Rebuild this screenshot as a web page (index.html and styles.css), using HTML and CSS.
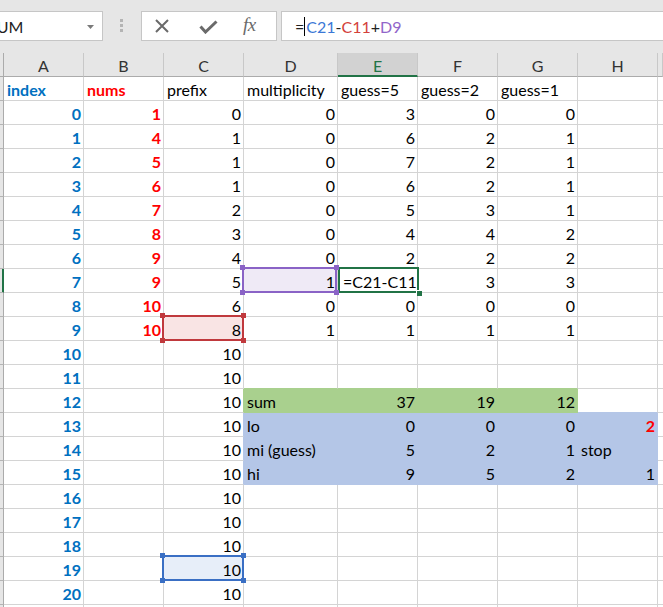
FILE: index.html
```html
<!DOCTYPE html>
<html>
<head>
<meta charset="utf-8">
<link rel="stylesheet" href="styles.css">
</head>
<body>
<div class="toolbar">
  <div class="namebox">
    <span class="nb-text">SUM</span>
    <svg class="nb-arrow" width="7" height="4" viewBox="0 0 7 4"><polygon points="0,0 7,0 3.5,4" fill="#7a7a7a"/></svg>
  </div>
  <div class="grip"><i></i><i></i><i></i></div>
  <div class="btns">
    <svg class="ic-x" width="14" height="14" viewBox="0 0 14 14"><path d="M1 1 L13 13 M13 1 L1 13" stroke="#6a6a6a" stroke-width="2" fill="none"/></svg>
    <svg class="ic-ok" width="19" height="14" viewBox="0 0 19 14"><path d="M1.5 6.5 L6.5 12 L17.5 1.5" stroke="#6a6a6a" stroke-width="3" fill="none"/></svg>
    <span class="ic-fx">fx</span>
  </div>
  <div class="fbox"><span>=</span><span class="caret"></span><span class="r1">C21</span><span>-</span><span class="r2">C11</span><span>+</span><span class="r3">D9</span></div>
</div>

<div class="sheet">
  <div class="row hdr">
    <div class="rh"></div>
    <div class="ch">A</div><div class="ch">B</div><div class="ch">C</div><div class="ch">D</div>
    <div class="ch sel-col">E</div><div class="ch">F</div><div class="ch">G</div><div class="ch">H</div><div class="ch"></div>
  </div>

  <div class="row">
    <div class="rh"></div>
    <div class="c bb">index</div><div class="c br">nums</div><div class="c">prefix</div><div class="c">multiplicity</div>
    <div class="c">guess=5</div><div class="c">guess=2</div><div class="c">guess=1</div><div class="c"></div><div class="c"></div>
  </div>

  <div class="row">
    <div class="rh"></div>
    <div class="c n bb">0</div><div class="c n br">1</div><div class="c n">0</div><div class="c n">0</div>
    <div class="c n">3</div><div class="c n">0</div><div class="c n">0</div><div class="c"></div><div class="c"></div>
  </div>
  <div class="row">
    <div class="rh"></div>
    <div class="c n bb">1</div><div class="c n br">4</div><div class="c n">1</div><div class="c n">0</div>
    <div class="c n">6</div><div class="c n">2</div><div class="c n">1</div><div class="c"></div><div class="c"></div>
  </div>
  <div class="row">
    <div class="rh"></div>
    <div class="c n bb">2</div><div class="c n br">5</div><div class="c n">1</div><div class="c n">0</div>
    <div class="c n">7</div><div class="c n">2</div><div class="c n">1</div><div class="c"></div><div class="c"></div>
  </div>
  <div class="row">
    <div class="rh"></div>
    <div class="c n bb">3</div><div class="c n br">6</div><div class="c n">1</div><div class="c n">0</div>
    <div class="c n">6</div><div class="c n">2</div><div class="c n">1</div><div class="c"></div><div class="c"></div>
  </div>
  <div class="row">
    <div class="rh"></div>
    <div class="c n bb">4</div><div class="c n br">7</div><div class="c n">2</div><div class="c n">0</div>
    <div class="c n">5</div><div class="c n">3</div><div class="c n">1</div><div class="c"></div><div class="c"></div>
  </div>
  <div class="row">
    <div class="rh"></div>
    <div class="c n bb">5</div><div class="c n br">8</div><div class="c n">3</div><div class="c n">0</div>
    <div class="c n">4</div><div class="c n">4</div><div class="c n">2</div><div class="c"></div><div class="c"></div>
  </div>
  <div class="row">
    <div class="rh"></div>
    <div class="c n bb">6</div><div class="c n br">9</div><div class="c n">4</div><div class="c n">0</div>
    <div class="c n">2</div><div class="c n">2</div><div class="c n">2</div><div class="c"></div><div class="c"></div>
  </div>
  <div class="row">
    <div class="rh act"></div>
    <div class="c n bb">7</div><div class="c n br">9</div><div class="c n">5</div>
    <div class="c n ref-purple-bg">1<span class="sel sel-purple"><i class="tl"></i><i class="tr"></i><i class="bl"></i><i class="br2"></i></span></div>
    <div class="c edit">=C21-C11<span class="sel sel-active"><i class="fill"></i></span></div>
    <div class="c n">3</div><div class="c n">3</div><div class="c"></div><div class="c"></div>
  </div>
  <div class="row">
    <div class="rh"></div>
    <div class="c n bb">8</div><div class="c n br">10</div><div class="c n">6</div><div class="c n">0</div>
    <div class="c n">0</div><div class="c n">0</div><div class="c n">0</div><div class="c"></div><div class="c"></div>
  </div>
  <div class="row">
    <div class="rh"></div>
    <div class="c n bb">9</div><div class="c n br">10</div>
    <div class="c n ref-red-bg">8<span class="sel sel-red"><i class="tl"></i><i class="tr"></i><i class="bl"></i><i class="br2"></i></span></div>
    <div class="c n">1</div>
    <div class="c n">1</div><div class="c n">1</div><div class="c n">1</div><div class="c"></div><div class="c"></div>
  </div>
  <div class="row">
    <div class="rh"></div>
    <div class="c n bb">10</div><div class="c"></div><div class="c n">10</div><div class="c"></div>
    <div class="c"></div><div class="c"></div><div class="c"></div><div class="c"></div><div class="c"></div>
  </div>
  <div class="row">
    <div class="rh"></div>
    <div class="c n bb">11</div><div class="c"></div><div class="c n">10</div><div class="c gt"></div>
    <div class="c gt"></div><div class="c gt"></div><div class="c gt"></div><div class="c"></div><div class="c"></div>
  </div>
  <div class="row">
    <div class="rh"></div>
    <div class="c n bb">12</div><div class="c"></div><div class="c n gl">10</div><div class="c gf">sum</div>
    <div class="c n gf">37</div><div class="c n gf">19</div><div class="c n gf">12</div><div class="c bt"></div><div class="c"></div>
  </div>
  <div class="row">
    <div class="rh"></div>
    <div class="c n bb">13</div><div class="c"></div><div class="c n bl-l">10</div><div class="c bf">lo</div>
    <div class="c n bf">0</div><div class="c n bf">0</div><div class="c n bf">0</div><div class="c n bf br">2</div><div class="c"></div>
  </div>
  <div class="row">
    <div class="rh"></div>
    <div class="c n bb">14</div><div class="c"></div><div class="c n bl-l">10</div><div class="c bf">mi (guess)</div>
    <div class="c n bf">5</div><div class="c n bf">2</div><div class="c n bf">1</div><div class="c bf">stop</div><div class="c"></div>
  </div>
  <div class="row">
    <div class="rh"></div>
    <div class="c n bb">15</div><div class="c"></div><div class="c n bl-l">10</div><div class="c bf">hi</div>
    <div class="c n bf">9</div><div class="c n bf">5</div><div class="c n bf">2</div><div class="c n bf">1</div><div class="c"></div>
  </div>
  <div class="row">
    <div class="rh"></div>
    <div class="c n bb">16</div><div class="c"></div><div class="c n">10</div><div class="c"></div>
    <div class="c"></div><div class="c"></div><div class="c"></div><div class="c"></div><div class="c"></div>
  </div>
  <div class="row">
    <div class="rh"></div>
    <div class="c n bb">17</div><div class="c"></div><div class="c n">10</div><div class="c"></div>
    <div class="c"></div><div class="c"></div><div class="c"></div><div class="c"></div><div class="c"></div>
  </div>
  <div class="row">
    <div class="rh"></div>
    <div class="c n bb">18</div><div class="c"></div><div class="c n">10</div><div class="c"></div>
    <div class="c"></div><div class="c"></div><div class="c"></div><div class="c"></div><div class="c"></div>
  </div>
  <div class="row">
    <div class="rh"></div>
    <div class="c n bb">19</div><div class="c"></div>
    <div class="c n ref-blue-bg">10<span class="sel sel-blue"><i class="tl"></i><i class="tr"></i><i class="bl"></i><i class="br2"></i></span></div>
    <div class="c"></div>
    <div class="c"></div><div class="c"></div><div class="c"></div><div class="c"></div><div class="c"></div>
  </div>
  <div class="row">
    <div class="rh"></div>
    <div class="c n bb">20</div><div class="c"></div><div class="c n">10</div><div class="c"></div>
    <div class="c"></div><div class="c"></div><div class="c"></div><div class="c"></div><div class="c"></div>
  </div>
  <div class="row">
    <div class="rh"></div>
    <div class="c"></div><div class="c"></div><div class="c"></div><div class="c"></div>
    <div class="c"></div><div class="c"></div><div class="c"></div><div class="c"></div><div class="c"></div>
  </div>
</div>
</body>
</html>
```

FILE: styles.css
```css
html, body {
  margin: 0;
  padding: 0;
  background: #ffffff;
  overflow: hidden;
}
body {
  font-family: Lato, "Liberation Sans", sans-serif;
  color: #000;
  width: 663px;
  height: 607px;
}

/* ---------- formula toolbar ---------- */
.toolbar {
  display: flex;
  align-items: flex-start;
  height: 53px;
  box-sizing: border-box;
  padding-top: 11px;
  background: #e6e6e6;
}
.namebox {
  display: flex;
  align-items: center;
  width: 104px;
  height: 30px;
  box-sizing: border-box;
  margin-left: -1px;
  background: #fff;
  border: 1px solid #c6c6c6;
  overflow: hidden;
}
.nb-text {
  font-size: 16px;
  margin-left: -12px;
  color: #222;
}
.nb-arrow {
  margin-left: auto;
  margin-right: 8px;
  margin-top: 1px;
}
.grip {
  display: flex;
  flex-direction: column;
  gap: 2px;
  margin-left: 17px;
  margin-top: 8px;
}
.grip i {
  display: block;
  width: 3px;
  height: 3px;
  background: #b4b4b4;
}
.btns {
  display: flex;
  align-items: center;
  width: 136px;
  height: 30px;
  box-sizing: border-box;
  margin-left: 18px;
  background: #fff;
  border: 1px solid #c6c6c6;
}
.ic-x { margin-left: 13px; }
.ic-ok { margin-left: 30px; margin-top: 1px; }
.ic-fx {
  margin-left: 25px;
  font-family: "Liberation Serif", "DejaVu Serif", serif;
  font-style: italic;
  font-size: 19px;
  color: #6a6a6a;
  letter-spacing: -0.5px;
  margin-top: -2px;
}
.fbox {
  display: flex;
  align-items: center;
  flex: 1;
  height: 30px;
  box-sizing: border-box;
  margin-left: 4px;
  padding-left: 13px;
  background: #fff;
  border: 1px solid #c6c6c6;
  border-right: none;
  font-size: 16px;
  color: #222;
}
.caret {
  display: inline-block;
  width: 1px;
  height: 19px;
  background: #000;
  margin: 0 1px 0 0;
}
.r1 { color: #3b78d6; }
.r2 { color: #d3413a; }
.r3 { color: #9165c9; }

/* ---------- sheet grid ---------- */
.sheet {
  display: flex;
  flex-direction: column;
}
.row {
  display: grid;
  grid-template-columns: 4px 80px 80px 80px 94px 80px 80px 80px 80px 1fr;
  height: 24px;
}
.rh {
  background: #e6e6e6;
  border-right: 1px solid #ababab;
  border-bottom: 1px solid #b4b4b4;
  box-sizing: border-box;
}
.rh.act {
  border-right-color: #217346;
  box-shadow: inset -1px 0 0 #217346;
}
.hdr .rh {
  border-bottom-color: #ababab;
}
.ch {
  display: flex;
  align-items: center;
  justify-content: center;
  background: #e6e6e6;
  border-right: 1px solid #c8c8c8;
  border-bottom: 1px solid #ababab;
  box-sizing: border-box;
  font-size: 16px;
  color: #333;
  padding-top: 1px;
}
.ch.sel-col {
  background: #d2d2d2;
  color: #217346;
  border-bottom: 2px solid #217346;
  padding-top: 2px;
}

.c {
  position: relative;
  display: flex;
  align-items: flex-end;
  box-sizing: border-box;
  border-right: 1px solid #d4d4d4;
  border-bottom: 1px solid #d4d4d4;
  padding: 0 2px 1px 3px;
  font-size: 16px;
  line-height: 18px;
  white-space: nowrap;
}
.c.n { justify-content: flex-end; }
.bb { color: #0070c0; font-weight: bold; }
.br { color: #ff0000; font-weight: bold; }

/* fills */
.gf { background: #a9d08e; border-color: #a9d08e; }
.bf { background: #b4c6e7; border-color: #b4c6e7; }
.gl { border-right-color: #a9d08e; }
.bl-l { border-right-color: #b4c6e7; }
.gt { border-bottom-color: #a9d08e; }
.bt { border-bottom-color: #b4c6e7; }

/* range reference highlights */
.ref-purple-bg { background: #efeaf6; }
.ref-red-bg { background: #f9e4e4; }
.ref-blue-bg { background: #e7eef9; }

.sel {
  position: absolute;
  border: 2px solid;
  pointer-events: none;
  z-index: 2;
}
.sel i {
  position: absolute;
  width: 5px;
  height: 5px;
}
.sel .tl { left: -4px; top: -4px; }
.sel .tr { right: -4px; top: -4px; }
.sel .bl { left: -4px; bottom: -4px; }
.sel .br2 { right: -4px; bottom: -4px; }

.sel-purple {
  left: -2px; right: 0; top: -2px; bottom: -1px;
  border-color: #8a63c6;
  z-index: 3;
}
.sel-purple i { background: #8a63c6; }
.sel-red {
  left: -2px; right: -1px; top: -2px; bottom: -1px;
  border-color: #c0393d;
}
.sel-red i { background: #c0393d; }
.sel-blue {
  left: -2px; right: -1px; top: -2px; bottom: -1px;
  border-color: #3a6fc4;
}
.sel-blue i { background: #3a6fc4; }

.c.edit { padding-left: 5px; }
.sel-active {
  left: 0; right: -2px; top: -2px; bottom: -1px;
  border-color: #217346;
}
.sel-active .fill {
  right: -5px;
  bottom: -5px;
  width: 5px;
  height: 5px;
  background: #217346;
  border-left: 1px solid #fff;
  border-top: 1px solid #fff;
}
```
